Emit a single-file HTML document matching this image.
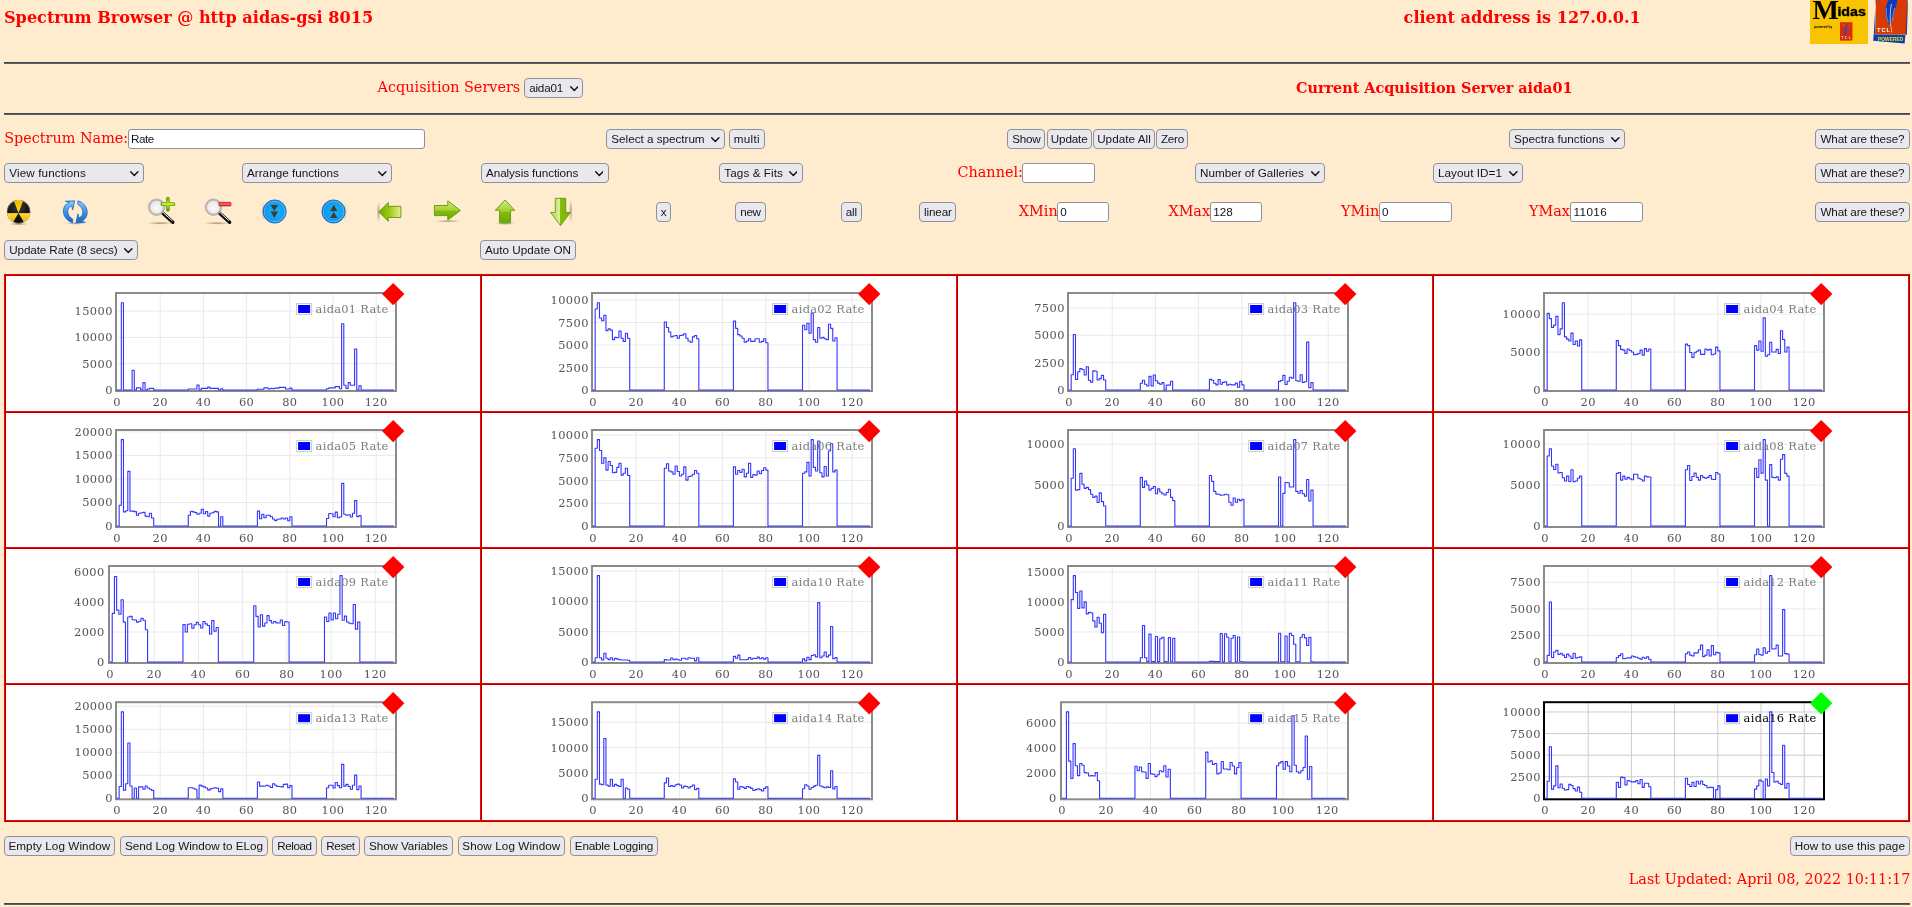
<!DOCTYPE html>
<html lang="en"><head><meta charset="utf-8"><title>Spectrum Browser @ http aidas-gsi 8015</title>
<style>
*{box-sizing:border-box}
html,body{margin:0;padding:0}
body{width:1912px;height:907px;overflow:hidden;background:#ffebcd;position:relative;font-family:"DejaVu Serif","Liberation Serif",serif;color:#f00}
.a{position:absolute;white-space:nowrap}
.t{position:absolute;white-space:nowrap;color:#ff0000;line-height:1;font-family:"DejaVu Serif","Liberation Serif",serif}
.b{font-weight:bold}
.hr{position:absolute;left:4px;width:1906px;height:2px;background:linear-gradient(#45474d 0 1px,#5d5f65 1px 2px)}
.btn,.sel,.inp{position:absolute;font-family:"Liberation Sans","DejaVu Sans",sans-serif;font-size:11.7px;color:#15141a;border:1px solid #8f8f9d;border-radius:4px;background:#e9e9ed;margin:0;padding:0;line-height:18.5px;white-space:nowrap;overflow:hidden}
.btn{text-align:center}
.sel{text-align:left}
.sel select{appearance:none;-webkit-appearance:none;border:0;background:transparent;font:inherit;color:inherit;margin:0;padding:0 0 0 4px;width:100%;height:100%;outline:0;display:block;line-height:18.5px;letter-spacing:inherit}
.sel svg{position:absolute;right:4.2px;top:7px;pointer-events:none}
.inp{background:#fff;border-radius:3px;padding:0 0 2px 2px;text-align:left;outline:0}
.cell{position:absolute;background:#fff;overflow:hidden}
.ln{position:absolute}
svg text{font-family:"DejaVu Serif","Liberation Serif",serif}
</style></head>
<body>
<div id="wrap" style="position:absolute;left:0;top:0;width:1912px;height:907px;will-change:transform">
<div class="t b" style="left:4.0px;top:10.18px;font-size:16.1px">Spectrum Browser @ http aidas-gsi 8015</div>
<div class="t b" style="left:1403.6px;top:10.18px;font-size:16.1px">client address is 127.0.0.1</div>
<svg class="a" style="left:1806px;top:0" width="106" height="48" viewBox="1806 0 106 48">
<rect x="1810" y="0" width="58" height="44" fill="#f8c300"/>
<text x="1812.4" y="18.6" font-size="28" font-weight="bold" fill="#000" style="font-family:'Liberation Serif','DejaVu Serif',serif">M</text>
<text x="1837.4" y="15.6" font-size="12.6" font-weight="bold" fill="#000" stroke="#000" stroke-width=".35" textLength="28.6" lengthAdjust="spacingAndGlyphs" style="font-family:'Liberation Sans','DejaVu Sans',sans-serif">idas</text>
<text x="1814.2" y="28.3" font-size="4" font-weight="bold" fill="#000" textLength="18" lengthAdjust="spacingAndGlyphs" style="font-family:'Liberation Sans','DejaVu Sans',sans-serif">powered by</text>
<rect x="1840" y="22.2" width="12.4" height="18.4" fill="#d92a0a"/>
<path d="M1846.8 24.6c-1.900 2.600-2.900 6.300-2.400 9.400.2 1.200.8 2 1.700 2.400-.4-2.200 0-4.500.8-6.600.5-1.800.7-3.400-.1-5.200z" fill="#1f55c8"/>
<path d="M1843.200 24.200l1.300 1.600M1849.800 25l-1 1.400" stroke="#f0b000" stroke-width=".6" fill="none"/>
<text x="1841.200" y="39.400" font-size="3.200" font-weight="bold" fill="#f6dede" textLength="9.600" style="font-family:'Liberation Sans','DejaVu Sans',sans-serif">TCL</text>
<path d="M1876 0H1907.400L1907 34.600H1875.300Z" fill="#d83a04"/>
<path d="M1873.600 34.400L1905.400 34.800L1904.600 43.600L1873.200 40.800Z" fill="#0b3fb0"/>
<path d="M1875.200 8L1876.200 0H1875.700L1873.800 34.400h1.600Z" fill="#0b3fb0"/>
<path d="M1905.600 34.800L1907.300 0.500L1908 0.500L1906.800 34.800Z" fill="#0b3fb0" opacity=".8"/>
<path d="M1888.600 0c-3 5-3.600 10.600-2.800 16.200.5 3.600 2.200 7.600 4.800 10.400.2-4 1.400-8 3-12 1.600-4.600 3-9.600 3.600-14.600z" fill="#0a3db8"/>
<path d="M1891.400 4c-1.200 6-1.600 13.400-.9 22" stroke="#dfe6fa" stroke-width=".8" fill="none"/>
<path d="M1886.400 8c-.6 4.800-.1 9.600 1.900 14.400M1894.800 8c-1.200 4-2.200 8.400-2.600 13.200" stroke="#7f9be6" stroke-width=".9" fill="none"/>
<text x="1877.000" y="32.200" font-size="5.800" font-weight="bold" fill="#fff" textLength="13" style="font-family:'Liberation Sans','DejaVu Sans',sans-serif">TCL</text>
<path d="M1891 26l.7 6.400" stroke="#fff" stroke-width=".6"/>
<text x="1878.000" y="40.600" font-size="5.200" font-weight="bold" fill="#f2e000" textLength="25.200" lengthAdjust="spacingAndGlyphs" style="font-family:'Liberation Sans','DejaVu Sans',sans-serif">POWERED</text>
</svg>
<div class="hr" style="top:62px"></div>
<div class="t" style="left:377.6px;top:79.82px;font-size:14.4px">Acquisition Servers</div>
<label class="sel" style="left:524.2px;top:78.2px;width:59.3px;height:19.6px;letter-spacing:-0.207px"><select><option>aida01</option><option>aida02</option><option>aida03</option><option>aida04</option></select><svg width="8.6" height="5.6" viewBox="0 0 8.6 5.6"><path d="M0.7 0.8 L4.3 4.5 L7.9 0.8" fill="none" stroke="#15141a" stroke-width="1.5" stroke-linecap="round" stroke-linejoin="round"/></svg></label>
<div class="t b" style="left:1296.0px;top:80.82px;font-size:14.4px">Current Acquisition Server aida01</div>
<div class="hr" style="top:113px"></div>
<div class="t" style="left:4.2px;top:131.32px;font-size:14.4px">Spectrum Name:</div>
<input class="inp" type="text" value="Rate" style="left:128.0px;top:129.2px;width:297.0px;height:19.8px;letter-spacing:-0.450px">
<label class="sel" style="left:606.3px;top:129.2px;width:118.7px;height:19.6px;letter-spacing:-0.015px"><select><option>Select a spectrum</option></select><svg width="8.6" height="5.6" viewBox="0 0 8.6 5.6"><path d="M0.7 0.8 L4.3 4.5 L7.9 0.8" fill="none" stroke="#15141a" stroke-width="1.5" stroke-linecap="round" stroke-linejoin="round"/></svg></label>
<button type="button" class="btn" style="left:729.0px;top:129.2px;width:35.7px;height:19.6px;letter-spacing:0.350px">multi</button>
<button type="button" class="btn" style="left:1007.3px;top:129.2px;width:38.1px;height:19.6px;letter-spacing:-0.232px">Show</button>
<button type="button" class="btn" style="left:1046.7px;top:129.2px;width:44.9px;height:19.6px;letter-spacing:-0.167px">Update</button>
<button type="button" class="btn" style="left:1092.6px;top:129.2px;width:62.8px;height:19.6px;letter-spacing:0.040px">Update All</button>
<button type="button" class="btn" style="left:1156.4px;top:129.2px;width:32.1px;height:19.6px;letter-spacing:-0.252px">Zero</button>
<label class="sel" style="left:1509.1px;top:129.2px;width:115.7px;height:19.6px"><select><option>Spectra functions</option></select><svg width="8.6" height="5.6" viewBox="0 0 8.6 5.6"><path d="M0.7 0.8 L4.3 4.5 L7.9 0.8" fill="none" stroke="#15141a" stroke-width="1.5" stroke-linecap="round" stroke-linejoin="round"/></svg></label>
<button type="button" class="btn" style="left:1815.1px;top:129.2px;width:94.7px;height:19.6px;letter-spacing:-0.110px">What are these?</button>
<label class="sel" style="left:4.3px;top:163.2px;width:139.4px;height:19.6px;letter-spacing:0.105px"><select><option>View functions</option></select><svg width="8.6" height="5.6" viewBox="0 0 8.6 5.6"><path d="M0.7 0.8 L4.3 4.5 L7.9 0.8" fill="none" stroke="#15141a" stroke-width="1.5" stroke-linecap="round" stroke-linejoin="round"/></svg></label>
<label class="sel" style="left:242.0px;top:163.2px;width:149.7px;height:19.6px;letter-spacing:0.012px"><select><option>Arrange functions</option></select><svg width="8.6" height="5.6" viewBox="0 0 8.6 5.6"><path d="M0.7 0.8 L4.3 4.5 L7.9 0.8" fill="none" stroke="#15141a" stroke-width="1.5" stroke-linecap="round" stroke-linejoin="round"/></svg></label>
<label class="sel" style="left:481.0px;top:163.2px;width:127.5px;height:19.6px;letter-spacing:-0.073px"><select><option>Analysis functions</option></select><svg width="8.6" height="5.6" viewBox="0 0 8.6 5.6"><path d="M0.7 0.8 L4.3 4.5 L7.9 0.8" fill="none" stroke="#15141a" stroke-width="1.5" stroke-linecap="round" stroke-linejoin="round"/></svg></label>
<label class="sel" style="left:719.3px;top:163.2px;width:83.3px;height:19.6px;letter-spacing:0.083px"><select><option>Tags &amp; Fits</option></select><svg width="8.6" height="5.6" viewBox="0 0 8.6 5.6"><path d="M0.7 0.8 L4.3 4.5 L7.9 0.8" fill="none" stroke="#15141a" stroke-width="1.5" stroke-linecap="round" stroke-linejoin="round"/></svg></label>
<div class="t" style="left:957.5px;top:165.32px;font-size:14.4px">Channel:</div>
<input class="inp" type="text" value="" style="left:1022.0px;top:163.2px;width:73.0px;height:19.8px">
<label class="sel" style="left:1195.0px;top:163.2px;width:129.8px;height:19.6px;letter-spacing:-0.008px"><select><option>Number of Galleries</option></select><svg width="8.6" height="5.6" viewBox="0 0 8.6 5.6"><path d="M0.7 0.8 L4.3 4.5 L7.9 0.8" fill="none" stroke="#15141a" stroke-width="1.5" stroke-linecap="round" stroke-linejoin="round"/></svg></label>
<label class="sel" style="left:1433.0px;top:163.2px;width:89.9px;height:19.6px;letter-spacing:0.059px"><select><option>Layout ID=1</option></select><svg width="8.6" height="5.6" viewBox="0 0 8.6 5.6"><path d="M0.7 0.8 L4.3 4.5 L7.9 0.8" fill="none" stroke="#15141a" stroke-width="1.5" stroke-linecap="round" stroke-linejoin="round"/></svg></label>
<button type="button" class="btn" style="left:1815.1px;top:163.2px;width:94.7px;height:19.6px;letter-spacing:-0.110px">What are these?</button>
<svg class="a" style="left:0;top:194px" width="600" height="36" viewBox="0 194 600 36">
<defs>
<radialGradient id="gsh"><stop offset="0" stop-color="#5a4a30" stop-opacity=".55"/><stop offset="1" stop-color="#5a4a30" stop-opacity="0"/></radialGradient>
<radialGradient id="gblk" cx=".5" cy=".3" r=".8"><stop offset="0" stop-color="#3a3a3a"/><stop offset=".6" stop-color="#111"/><stop offset="1" stop-color="#000"/></radialGradient>
<linearGradient id="gyel" gradientUnits="userSpaceOnUse" x1="0" y1="200" x2="0" y2="224"><stop offset="0" stop-color="#f2b600"/><stop offset=".45" stop-color="#ffd810"/><stop offset=".5" stop-color="#ffe23a"/><stop offset="1" stop-color="#e9a800"/></linearGradient>
<linearGradient id="gblu" x1="0" y1="0" x2="0" y2="1"><stop offset="0" stop-color="#8fcdf8"/><stop offset=".5" stop-color="#3d97e6"/><stop offset="1" stop-color="#0f66cf"/></linearGradient>
<radialGradient id="gbtn" cx=".55" cy=".5" r=".6"><stop offset="0" stop-color="#16b4f8"/><stop offset=".7" stop-color="#149be9"/><stop offset="1" stop-color="#0a67c8"/></radialGradient>
<radialGradient id="glens" cx=".5" cy=".55" r=".6"><stop offset="0" stop-color="#fbf9f9"/><stop offset="1" stop-color="#e9e2e2"/></radialGradient>
<linearGradient id="ggrnh" x1="0" y1="0" x2="1" y2="0"><stop offset="0" stop-color="#6aa807"/><stop offset=".45" stop-color="#9bc80f"/><stop offset="1" stop-color="#e6ee8c"/></linearGradient>
<linearGradient id="ggrnv" x1="0" y1="0" x2="0" y2="1"><stop offset="0" stop-color="#d2e88e"/><stop offset=".5" stop-color="#a4cf2e"/><stop offset=".52" stop-color="#86bd0b"/><stop offset="1" stop-color="#6aa807"/></linearGradient>
<linearGradient id="ggrnd" x1="0" y1="0" x2="1" y2="0"><stop offset="0" stop-color="#b6d94e"/><stop offset=".45" stop-color="#d9ec9a"/><stop offset=".5" stop-color="#86bd0b"/><stop offset="1" stop-color="#78b207"/></linearGradient>
<linearGradient id="gplus" x1="0" y1="0" x2="0" y2="1"><stop offset="0" stop-color="#7cb60a"/><stop offset=".5" stop-color="#c9e23a"/><stop offset="1" stop-color="#6aa807"/></linearGradient>
<linearGradient id="gminus" x1="0" y1="0" x2="0" y2="1"><stop offset="0" stop-color="#d81e1e"/><stop offset=".5" stop-color="#f07a7a"/><stop offset="1" stop-color="#c41010"/></linearGradient>
</defs>
<!-- radiation -->
<ellipse cx="18.6" cy="224" rx="9.5" ry="1.6" fill="url(#gsh)"/>
<circle cx="18.6" cy="211.8" r="11.7" fill="url(#gblk)"/>
<clipPath id="crad"><circle cx="18.6" cy="211.8" r="11.7"/></clipPath><g fill="url(#gyel)" clip-path="url(#crad)"><path d="M18.5 212.9L29.25 184.89L7.75 184.89Z"/><path d="M18.5 212.9L-11.50 212.90L3.50 238.88Z"/><path d="M18.5 212.9L33.50 238.88L48.50 212.90Z"/></g>
<circle cx="18.6" cy="211.8" r="11.3" fill="none" stroke="#fff" stroke-opacity=".35" stroke-width=".8"/>
<path d="M7 212.9H30.2" stroke="#1a1a3a" stroke-opacity=".45" stroke-width=".7"/>
<!-- refresh -->
<ellipse cx="75.5" cy="223.4" rx="9.5" ry="1.4" fill="url(#gsh)"/>
<g fill="url(#gblu)" stroke="#1565c8" stroke-width=".8" stroke-linejoin="round">
<path d="M72.6 222.800C66.800 221 63.200 216 63.400 210.800 63.700 205.800 67 202.800 69.800 202.200L65.300 201.300 74.600 200.800 72.700 209.800 71.700 205.600C69.400 206.600 67.600 208.600 67.700 211.800 67.900 215 70 217.600 72.800 219.200Z"/>
<path d="M78 200.800C83.800 202.600 87.400 207.600 87.200 212.800 86.900 217.800 83.600 220.800 80.800 221.400L85.300 222.300 76 222.800 77.900 213.800 78.900 218C81.200 217 83 215 82.900 211.800 82.700 208.600 80.600 206 77.800 204.400Z"/>
</g>
<!-- zoom in -->
<ellipse cx="160" cy="223.200" rx="13" ry="1.500" fill="url(#gsh)"/>
<path d="M162.300 212.800L172.800 222.300" stroke="#0a0a0a" stroke-width="3.400" stroke-linecap="round"/>
<path d="M162.800 212.200L172 220.600" stroke="#f4f4f4" stroke-width="1" stroke-linecap="round"/>
<circle cx="156.600" cy="207.200" r="7.300" fill="url(#glens)" stroke="#b9b9b9" stroke-width="1.900"/>
<circle cx="156.600" cy="207.200" r="8.300" fill="none" stroke="#9c9c9c" stroke-width=".5"/>
<path d="M167.900 198.600V209.800M162.300 204.200H173.500" stroke="#64a005" stroke-width="3.700" stroke-linecap="round"/>
<path d="M167.900 198.900V209.500M162.600 204.200H173.200" stroke="url(#gplus)" stroke-width="2.300" stroke-linecap="round"/>
<path d="M163 204.200H172.800" stroke="#d6ea50" stroke-width="1.100" stroke-linecap="round"/>
<!-- zoom out -->
<ellipse cx="217" cy="223.200" rx="13" ry="1.500" fill="url(#gsh)"/>
<path d="M219.100 212.800L229.600 222.300" stroke="#0a0a0a" stroke-width="3.400" stroke-linecap="round"/>
<path d="M219.600 212.200L228.800 220.600" stroke="#f4f4f4" stroke-width="1" stroke-linecap="round"/>
<circle cx="213.400" cy="207.200" r="7.300" fill="url(#glens)" stroke="#b9b9b9" stroke-width="1.900"/>
<circle cx="213.400" cy="207.200" r="8.300" fill="none" stroke="#9c9c9c" stroke-width=".5"/>
<rect x="218.800" y="202.300" width="12.300" height="3.700" rx="1" fill="url(#gminus)" stroke="#c01515" stroke-width=".6"/>
<!-- down / up round buttons -->
<ellipse cx="263" cy="211.500" rx="1.800" ry="10" fill="url(#gsh)" opacity=".5"/>
<circle cx="274.600" cy="211.500" r="11.600" fill="url(#gbtn)" stroke="#0a62c6" stroke-width=".8"/>
<circle cx="274.600" cy="211.500" r="10.300" fill="none" stroke="#9fdcff" stroke-opacity=".7" stroke-width=".7"/>
<path d="M270.600 205H278.100L274.350 211.200ZM270.600 211.600H278.100L274.350 218.100Z" fill="#3b3b3b"/>
<ellipse cx="345.200" cy="211.500" rx="1.800" ry="10" fill="url(#gsh)" opacity=".5"/>
<circle cx="333.500" cy="211.500" r="11.600" fill="url(#gbtn)" stroke="#0a62c6" stroke-width=".8"/>
<circle cx="333.500" cy="211.500" r="10.300" fill="none" stroke="#9fdcff" stroke-opacity=".7" stroke-width=".7"/>
<path d="M330.200 211.200H337.400L333.800 204.800ZM330.200 217.900H337.400L333.800 211.700Z" fill="#3b3b3b"/>
<!-- left arrow -->
<ellipse cx="378.600" cy="212" rx="2" ry="11" fill="url(#gsh)" opacity=".8"/>
<path d="M378.900 211.800L388.300 202.400V206.300H400.900V217.500H388.300V221.300Z" fill="url(#ggrnh)" stroke="#5d9a08" stroke-width=".9" stroke-linejoin="round"/>
<!-- right arrow -->
<ellipse cx="448" cy="221.200" rx="13" ry="1.300" fill="url(#gsh)"/>
<path d="M460.400 210.500L447.800 200.800V205.500H434.400V215.600H447.800V220Z" fill="url(#ggrnv)" stroke="#5d9a08" stroke-width=".9" stroke-linejoin="round"/>
<!-- up arrow -->
<ellipse cx="505" cy="223.600" rx="10" ry="1.300" fill="url(#gsh)"/>
<path d="M505 200L514.700 210.300H510.600V222.800H499.500V210.300H495.300Z" fill="url(#ggrnv)" stroke="#5d9a08" stroke-width=".9" stroke-linejoin="round"/>
<!-- down arrow -->
<ellipse cx="570.800" cy="211" rx="2" ry="12" fill="url(#gsh)" opacity=".8"/>
<path d="M560.500 225.600L550.600 212.400H555.300V198.300H565.700V212.400H570.400Z" fill="url(#ggrnd)" stroke="#5d9a08" stroke-width=".9" stroke-linejoin="round"/>
</svg>
<button type="button" class="btn" style="left:656.3px;top:202.2px;width:14.5px;height:19.6px">x</button>
<button type="button" class="btn" style="left:735.3px;top:202.2px;width:30.4px;height:19.6px;letter-spacing:-0.346px">new</button>
<button type="button" class="btn" style="left:841.0px;top:202.2px;width:20.6px;height:19.6px;letter-spacing:-0.206px">all</button>
<button type="button" class="btn" style="left:919.4px;top:202.2px;width:37.1px;height:19.6px;letter-spacing:-0.144px">linear</button>
<div class="t" style="left:1018.8px;top:204.32px;font-size:14.4px">XMin</div>
<input class="inp" type="text" value="0" style="left:1057.2px;top:202.2px;width:51.5px;height:19.8px">
<div class="t" style="left:1168.4px;top:204.32px;font-size:14.4px">XMax</div>
<input class="inp" type="text" value="128" style="left:1210.2px;top:202.2px;width:51.8px;height:19.8px;letter-spacing:0.042px">
<div class="t" style="left:1341.1px;top:204.32px;font-size:14.4px">YMin</div>
<input class="inp" type="text" value="0" style="left:1379.0px;top:202.2px;width:73.1px;height:19.8px">
<div class="t" style="left:1528.9px;top:204.32px;font-size:14.4px">YMax</div>
<input class="inp" type="text" value="11016" style="left:1570.4px;top:202.2px;width:72.8px;height:19.8px;letter-spacing:0.432px">
<button type="button" class="btn" style="left:1815.1px;top:202.2px;width:94.7px;height:19.6px;letter-spacing:-0.110px">What are these?</button>
<label class="sel" style="left:4.2px;top:240.2px;width:133.8px;height:19.6px;letter-spacing:-0.108px"><select><option>Update Rate (8 secs)</option></select><svg width="8.6" height="5.6" viewBox="0 0 8.6 5.6"><path d="M0.7 0.8 L4.3 4.5 L7.9 0.8" fill="none" stroke="#15141a" stroke-width="1.5" stroke-linecap="round" stroke-linejoin="round"/></svg></label>
<button type="button" class="btn" style="left:480.3px;top:240.2px;width:95.4px;height:19.6px;letter-spacing:0.020px">Auto Update ON</button>
<div class="a" style="left:4px;top:274px;width:1906px;height:548px;background:#ff0000"></div>
<div class="ln" style="left:5px;top:274px;width:1px;height:548px;background:#aa0000"></div>
<div class="ln" style="left:481px;top:274px;width:1px;height:548px;background:#aa0000"></div>
<div class="ln" style="left:957px;top:274px;width:1px;height:548px;background:#aa0000"></div>
<div class="ln" style="left:1433px;top:274px;width:1px;height:548px;background:#aa0000"></div>
<div class="ln" style="left:1909px;top:274px;width:1px;height:548px;background:#aa0000"></div>
<div class="ln" style="left:4px;top:275px;width:1906px;height:1px;background:#aa0000"></div>
<div class="ln" style="left:4px;top:412px;width:1906px;height:1px;background:#aa0000"></div>
<div class="ln" style="left:4px;top:548px;width:1906px;height:1px;background:#aa0000"></div>
<div class="ln" style="left:4px;top:684px;width:1906px;height:1px;background:#aa0000"></div>
<div class="ln" style="left:4px;top:821px;width:1906px;height:1px;background:#aa0000"></div>
<div class="cell" style="left:6px;top:276px;width:474px;height:135px"><svg width="474" height="135" viewBox="0 0 474 135" style="display:block"><path d="M154.20 18.00V114.00M197.40 18.00V114.00M240.60 18.00V114.00M283.80 18.00V114.00M327.00 18.00V114.00M370.20 18.00V114.00M111.00 87.71H389.00M111.00 61.43H389.00M111.00 35.14H389.00" stroke="#eaeaea" stroke-width="1" fill="none"/><rect x="110.00" y="17.00" width="280.00" height="98.00" fill="none" stroke="#8b8b8b" stroke-width="2"/><path d="M111.00 114.00H113.16V114.00H115.32V26.73H117.48V114.00H119.64V114.00H121.80V114.00H123.96V114.00H126.12V94.28H128.28V114.00H130.44V111.90H132.60V111.90H134.76V114.00H136.92V106.64H139.08V114.00H141.24V112.95H143.40V112.42H145.56V112.42H147.72V114.00H149.88V114.00H152.04V114.00H154.20V114.00H156.36V114.00H158.52V114.00H160.68V114.00H162.84V114.00H165.00V114.00H167.16V114.00H169.32V114.00H171.48V114.00H173.64V114.00H175.80V114.00H177.96V114.00H180.12V114.00H182.28V112.95H184.44V112.95H186.60V112.95H188.76V112.95H190.92V109.06H193.08V114.00H195.24V112.42H197.40V112.42H199.56V112.42H201.72V111.11H203.88V112.42H206.04V112.42H208.20V112.42H210.36V112.42H212.52V114.00H214.68V112.69H216.84V114.00H219.00V114.00H221.16V114.00H223.32V114.00H225.48V114.00H227.64V114.00H229.80V114.00H231.96V114.00H234.12V114.00H236.28V114.00H238.44V114.00H240.60V114.00H242.76V114.00H244.92V114.00H247.08V114.00H249.24V114.00H251.40V113.21H253.56V113.21H255.72V113.21H257.88V111.90H260.04V111.90H262.20V112.95H264.36V112.42H266.52V112.69H268.68V112.16H270.84V112.16H273.00V111.37H275.16V111.37H277.32V111.37H279.48V112.95H281.64V112.95H283.80V112.16H285.96V114.00H288.12V114.00H290.28V114.00H292.44V114.00H294.60V114.00H296.76V114.00H298.92V114.00H301.08V114.00H303.24V114.00H305.40V114.00H307.56V114.00H309.72V114.00H311.88V114.00H314.04V114.00H316.20V114.00H318.36V114.00H320.52V112.69H322.68V111.90H324.84V111.90H327.00V111.90H329.16V110.58H331.32V110.58H333.48V112.69H335.64V47.76H337.80V109.27H339.96V112.42H342.12V106.64H344.28V109.27H346.44V109.27H348.60V72.99H350.76V114.00H352.92V109.79H355.08V114.00H357.24V114.00H359.40V114.00H361.56V114.00H363.72V114.00H365.88V114.00H368.04V114.00H370.20V114.00H372.36V114.00H374.52V114.00H376.68V114.00H378.84V114.00H381.00V114.00H383.16V114.00H385.32V114.00H387.48" stroke="#3434ff" stroke-width="1.1" fill="none" stroke-linejoin="round" stroke-linecap="round"/><g font-size="11.4" letter-spacing="0.4" fill="#545454"><text x="111.00" y="129.80" text-anchor="middle">0</text><text x="154.20" y="129.80" text-anchor="middle">20</text><text x="197.40" y="129.80" text-anchor="middle">40</text><text x="240.60" y="129.80" text-anchor="middle">60</text><text x="283.80" y="129.80" text-anchor="middle">80</text><text x="327.00" y="129.80" text-anchor="middle">100</text><text x="370.20" y="129.80" text-anchor="middle">120</text><text x="106.80" y="118.00" text-anchor="end">0</text><text x="106.80" y="91.71" text-anchor="end">5000</text><text x="106.80" y="65.43" text-anchor="end">10000</text><text x="106.80" y="39.14" text-anchor="end">15000</text></g><rect x="290.60" y="27.50" width="15" height="11" fill="#fff" stroke="#ccc" stroke-width="1"/><rect x="292.10" y="29.00" width="12" height="8" fill="#0000ff"/><text x="309.60" y="36.80" font-size="11.4" letter-spacing="0.3" fill="#7d7d7d">aida01 Rate</text><path d="M387.20 6.90L398.40 18.10L387.20 29.30L376.00 18.10Z" fill="#ff0000"/></svg></div>
<div class="cell" style="left:482px;top:276px;width:474px;height:135px"><svg width="474" height="135" viewBox="0 0 474 135" style="display:block"><path d="M154.20 18.00V114.00M197.40 18.00V114.00M240.60 18.00V114.00M283.80 18.00V114.00M327.00 18.00V114.00M370.20 18.00V114.00M111.00 91.51H389.00M111.00 69.01H389.00M111.00 46.52H389.00M111.00 24.03H389.00" stroke="#eaeaea" stroke-width="1" fill="none"/><rect x="110.00" y="17.00" width="280.00" height="98.00" fill="none" stroke="#8b8b8b" stroke-width="2"/><path d="M111.00 114.00H113.16V33.03H115.32V26.73H117.48V42.02H119.64V44.72H121.80V39.32H123.96V54.62H126.12V52.82H128.28V54.17H130.44V63.62H132.60V61.37H134.76V61.82H136.92V55.07H139.08V62.27H141.24V65.42H143.40V57.32H145.56V62.27H147.72V114.00H149.88V114.00H152.04V114.00H154.20V114.00H156.36V114.00H158.52V114.00H160.68V114.00H162.84V114.00H165.00V114.00H167.16V114.00H169.32V114.00H171.48V114.00H173.64V114.00H175.80V114.00H177.96V114.00H180.12V114.00H182.28V46.07H184.44V51.47H186.60V55.97H188.76V60.92H190.92V60.02H193.08V59.57H195.24V62.27H197.40V59.57H199.56V59.12H201.72V57.77H203.88V62.27H206.04V64.97H208.20V66.31H210.36V60.92H212.52V59.57H214.68V62.72H216.84V114.00H219.00V114.00H221.16V114.00H223.32V114.00H225.48V114.00H227.64V114.00H229.80V114.00H231.96V114.00H234.12V114.00H236.28V114.00H238.44V114.00H240.60V114.00H242.76V114.00H244.92V114.00H247.08V114.00H249.24V114.00H251.40V45.17H253.56V52.37H255.72V58.67H257.88V60.02H260.04V62.27H262.20V66.31H264.36V64.97H266.52V62.72H268.68V65.42H270.84V65.42H273.00V62.72H275.16V62.72H277.32V66.31H279.48V65.42H281.64V62.72H283.80V66.76H285.96V114.00H288.12V114.00H290.28V114.00H292.44V114.00H294.60V114.00H296.76V114.00H298.92V114.00H301.08V114.00H303.24V114.00H305.40V114.00H307.56V114.00H309.72V114.00H311.88V114.00H314.04V114.00H316.20V114.00H318.36V114.00H320.52V49.22H322.68V53.72H324.84V47.42H327.00V57.32H329.16V37.07H331.32V63.62H333.48V66.31H335.64V51.47H337.80V62.27H339.96V61.37H342.12V62.72H344.28V63.62H346.44V48.32H348.60V52.37H350.76V64.97H352.92V61.82H355.08V114.00H357.24V114.00H359.40V114.00H361.56V114.00H363.72V114.00H365.88V114.00H368.04V114.00H370.20V114.00H372.36V114.00H374.52V114.00H376.68V114.00H378.84V114.00H381.00V114.00H383.16V114.00H385.32V114.00H387.48" stroke="#3434ff" stroke-width="1.1" fill="none" stroke-linejoin="round" stroke-linecap="round"/><g font-size="11.4" letter-spacing="0.4" fill="#545454"><text x="111.00" y="129.80" text-anchor="middle">0</text><text x="154.20" y="129.80" text-anchor="middle">20</text><text x="197.40" y="129.80" text-anchor="middle">40</text><text x="240.60" y="129.80" text-anchor="middle">60</text><text x="283.80" y="129.80" text-anchor="middle">80</text><text x="327.00" y="129.80" text-anchor="middle">100</text><text x="370.20" y="129.80" text-anchor="middle">120</text><text x="106.80" y="118.00" text-anchor="end">0</text><text x="106.80" y="95.51" text-anchor="end">2500</text><text x="106.80" y="73.01" text-anchor="end">5000</text><text x="106.80" y="50.52" text-anchor="end">7500</text><text x="106.80" y="28.03" text-anchor="end">10000</text></g><rect x="290.60" y="27.50" width="15" height="11" fill="#fff" stroke="#ccc" stroke-width="1"/><rect x="292.10" y="29.00" width="12" height="8" fill="#0000ff"/><text x="309.60" y="36.80" font-size="11.4" letter-spacing="0.3" fill="#7d7d7d">aida02 Rate</text><path d="M387.20 6.90L398.40 18.10L387.20 29.30L376.00 18.10Z" fill="#ff0000"/></svg></div>
<div class="cell" style="left:958px;top:276px;width:474px;height:135px"><svg width="474" height="135" viewBox="0 0 474 135" style="display:block"><path d="M154.20 18.00V114.00M197.40 18.00V114.00M240.60 18.00V114.00M283.80 18.00V114.00M327.00 18.00V114.00M370.20 18.00V114.00M111.00 86.66H389.00M111.00 59.32H389.00M111.00 31.98H389.00" stroke="#eaeaea" stroke-width="1" fill="none"/><rect x="110.00" y="17.00" width="280.00" height="98.00" fill="none" stroke="#8b8b8b" stroke-width="2"/><path d="M111.00 114.00H113.16V98.69H115.32V58.55H117.48V103.39H119.64V95.74H121.80V92.67H123.96V93.55H126.12V99.02H128.28V90.81H130.44V104.27H132.60V106.13H134.76V94.86H136.92V95.19H139.08V103.94H141.24V102.63H143.40V99.35H145.56V103.94H147.72V114.00H149.88V114.00H152.04V114.00H154.20V114.00H156.36V114.00H158.52V114.00H160.68V114.00H162.84V114.00H165.00V114.00H167.16V114.00H169.32V114.00H171.48V114.00H173.64V114.00H175.80V114.00H177.96V114.00H180.12V114.00H182.28V107.22H184.44V104.27H186.60V108.20H188.76V109.95H190.92V100.33H193.08V109.84H195.24V99.02H197.40V104.81H199.56V107.11H201.72V108.20H203.88V106.67H206.04V114.00H208.20V109.08H210.36V109.08H212.52V105.25H214.68V114.00H216.84V114.00H219.00V114.00H221.16V114.00H223.32V114.00H225.48V114.00H227.64V114.00H229.80V114.00H231.96V114.00H234.12V114.00H236.28V114.00H238.44V114.00H240.60V114.00H242.76V114.00H244.92V114.00H247.08V114.00H249.24V114.00H251.40V103.39H253.56V104.27H255.72V107.22H257.88V108.86H260.04V103.61H262.20V108.20H264.36V106.34H266.52V105.80H268.68V109.08H270.84V108.20H273.00V108.86H275.16V108.86H277.32V107.11H279.48V111.27H281.64V105.36H283.80V108.86H285.96V114.00H288.12V114.00H290.28V114.00H292.44V114.00H294.60V114.00H296.76V114.00H298.92V114.00H301.08V114.00H303.24V114.00H305.40V114.00H307.56V114.00H309.72V114.00H311.88V114.00H314.04V114.00H316.20V114.00H318.36V114.00H320.52V105.36H322.68V104.49H324.84V99.35H327.00V108.53H329.16V105.25H331.32V101.20H333.48V102.08H335.64V26.73H337.80V104.81H339.96V105.25H342.12V98.80H344.28V106.34H346.44V105.80H348.60V66.10H350.76V111.59H352.92V106.67H355.08V114.00H357.24V114.00H359.40V114.00H361.56V114.00H363.72V114.00H365.88V114.00H368.04V114.00H370.20V114.00H372.36V114.00H374.52V114.00H376.68V114.00H378.84V114.00H381.00V114.00H383.16V114.00H385.32V114.00H387.48" stroke="#3434ff" stroke-width="1.1" fill="none" stroke-linejoin="round" stroke-linecap="round"/><g font-size="11.4" letter-spacing="0.4" fill="#545454"><text x="111.00" y="129.80" text-anchor="middle">0</text><text x="154.20" y="129.80" text-anchor="middle">20</text><text x="197.40" y="129.80" text-anchor="middle">40</text><text x="240.60" y="129.80" text-anchor="middle">60</text><text x="283.80" y="129.80" text-anchor="middle">80</text><text x="327.00" y="129.80" text-anchor="middle">100</text><text x="370.20" y="129.80" text-anchor="middle">120</text><text x="106.80" y="118.00" text-anchor="end">0</text><text x="106.80" y="90.66" text-anchor="end">2500</text><text x="106.80" y="63.32" text-anchor="end">5000</text><text x="106.80" y="35.98" text-anchor="end">7500</text></g><rect x="290.60" y="27.50" width="15" height="11" fill="#fff" stroke="#ccc" stroke-width="1"/><rect x="292.10" y="29.00" width="12" height="8" fill="#0000ff"/><text x="309.60" y="36.80" font-size="11.4" letter-spacing="0.3" fill="#7d7d7d">aida03 Rate</text><path d="M387.20 6.90L398.40 18.10L387.20 29.30L376.00 18.10Z" fill="#ff0000"/></svg></div>
<div class="cell" style="left:1434px;top:276px;width:474px;height:135px"><svg width="474" height="135" viewBox="0 0 474 135" style="display:block"><path d="M154.20 18.00V114.00M197.40 18.00V114.00M240.60 18.00V114.00M283.80 18.00V114.00M327.00 18.00V114.00M370.20 18.00V114.00M111.00 76.06H389.00M111.00 38.11H389.00" stroke="#eaeaea" stroke-width="1" fill="none"/><rect x="110.00" y="17.00" width="280.00" height="98.00" fill="none" stroke="#8b8b8b" stroke-width="2"/><path d="M111.00 114.00H113.16V37.35H115.32V42.66H117.48V51.39H119.64V49.11H121.80V40.39H123.96V58.60H126.12V52.91H128.28V26.73H130.44V60.88H132.60V63.15H134.76V65.05H136.92V57.08H139.08V68.47H141.24V65.05H143.40V69.98H145.56V63.91H147.72V114.00H149.88V114.00H152.04V114.00H154.20V114.00H156.36V114.00H158.52V114.00H160.68V114.00H162.84V114.00H165.00V114.00H167.16V114.00H169.32V114.00H171.48V114.00H173.64V114.00H175.80V114.00H177.96V114.00H180.12V114.00H182.28V64.67H184.44V69.60H186.60V73.40H188.76V74.16H190.92V77.57H193.08V73.02H195.24V74.54H197.40V76.06H199.56V78.71H201.72V78.33H203.88V77.57H206.04V74.16H208.20V79.09H210.36V72.64H212.52V75.30H214.68V73.02H216.84V114.00H219.00V114.00H221.16V114.00H223.32V114.00H225.48V114.00H227.64V114.00H229.80V114.00H231.96V114.00H234.12V114.00H236.28V114.00H238.44V114.00H240.60V114.00H242.76V114.00H244.92V114.00H247.08V114.00H249.24V114.00H251.40V68.09H253.56V69.60H255.72V76.43H257.88V81.37H260.04V76.81H262.20V75.30H264.36V74.16H266.52V78.33H268.68V78.33H270.84V73.02H273.00V74.16H275.16V73.40H277.32V78.71H279.48V77.95H281.64V71.12H283.80V74.92H285.96V114.00H288.12V114.00H290.28V114.00H292.44V114.00H294.60V114.00H296.76V114.00H298.92V114.00H301.08V114.00H303.24V114.00H305.40V114.00H307.56V114.00H309.72V114.00H311.88V114.00H314.04V114.00H316.20V114.00H318.36V114.00H320.52V69.60H322.68V74.16H324.84V65.05H327.00V75.30H329.16V41.91H331.32V80.23H333.48V78.71H335.64V66.19H337.80V76.06H339.96V76.06H342.12V73.40H344.28V77.57H346.44V54.81H348.60V63.53H350.76V76.06H352.92V71.12H355.08V114.00H357.24V114.00H359.40V114.00H361.56V114.00H363.72V114.00H365.88V114.00H368.04V114.00H370.20V114.00H372.36V114.00H374.52V114.00H376.68V114.00H378.84V114.00H381.00V114.00H383.16V114.00H385.32V114.00H387.48" stroke="#3434ff" stroke-width="1.1" fill="none" stroke-linejoin="round" stroke-linecap="round"/><g font-size="11.4" letter-spacing="0.4" fill="#545454"><text x="111.00" y="129.80" text-anchor="middle">0</text><text x="154.20" y="129.80" text-anchor="middle">20</text><text x="197.40" y="129.80" text-anchor="middle">40</text><text x="240.60" y="129.80" text-anchor="middle">60</text><text x="283.80" y="129.80" text-anchor="middle">80</text><text x="327.00" y="129.80" text-anchor="middle">100</text><text x="370.20" y="129.80" text-anchor="middle">120</text><text x="106.80" y="118.00" text-anchor="end">0</text><text x="106.80" y="80.06" text-anchor="end">5000</text><text x="106.80" y="42.11" text-anchor="end">10000</text></g><rect x="290.60" y="27.50" width="15" height="11" fill="#fff" stroke="#ccc" stroke-width="1"/><rect x="292.10" y="29.00" width="12" height="8" fill="#0000ff"/><text x="309.60" y="36.80" font-size="11.4" letter-spacing="0.3" fill="#7d7d7d">aida04 Rate</text><path d="M387.20 6.90L398.40 18.10L387.20 29.30L376.00 18.10Z" fill="#ff0000"/></svg></div>
<div class="cell" style="left:6px;top:413px;width:474px;height:134px"><svg width="474" height="134" viewBox="0 0 474 134" style="display:block"><path d="M154.20 18.00V113.00M197.40 18.00V113.00M240.60 18.00V113.00M283.80 18.00V113.00M327.00 18.00V113.00M370.20 18.00V113.00M111.00 89.47H389.00M111.00 65.94H389.00M111.00 42.40H389.00M111.00 18.87H389.00" stroke="#eaeaea" stroke-width="1" fill="none"/><rect x="110.00" y="17.00" width="280.00" height="97.00" fill="none" stroke="#8b8b8b" stroke-width="2"/><path d="M111.00 113.00H113.16V92.29H115.32V26.64H117.48V98.88H119.64V97.70H121.80V58.41H123.96V98.08H126.12V98.08H128.28V98.65H130.44V102.18H132.60V100.29H134.76V99.82H136.92V99.35H139.08V103.12H141.24V103.82H143.40V100.29H145.56V105.00H147.72V113.00H149.88V113.00H152.04V113.00H154.20V113.00H156.36V113.00H158.52V113.00H160.68V113.00H162.84V113.00H165.00V113.00H167.16V113.00H169.32V113.00H171.48V113.00H173.64V113.00H175.80V113.00H177.96V113.00H180.12V113.00H182.28V102.18H184.44V98.27H186.60V98.88H188.76V99.59H190.92V101.23H193.08V100.29H195.24V96.29H197.40V100.76H199.56V98.65H201.72V103.12H203.88V100.29H206.04V99.82H208.20V98.41H210.36V98.88H212.52V113.00H214.68V103.82H216.84V113.00H219.00V113.00H221.16V113.00H223.32V113.00H225.48V113.00H227.64V113.00H229.80V113.00H231.96V113.00H234.12V113.00H236.28V113.00H238.44V113.00H240.60V113.00H242.76V113.00H244.92V113.00H247.08V113.00H249.24V113.00H251.40V98.08H253.56V105.70H255.72V101.23H257.88V104.76H260.04V102.18H262.20V102.18H264.36V103.82H266.52V105.94H268.68V107.59H270.84V106.27H273.00V105.94H275.16V105.00H277.32V105.94H279.48V105.00H281.64V107.82H283.80V103.82H285.96V113.00H288.12V113.00H290.28V113.00H292.44V113.00H294.60V113.00H296.76V113.00H298.92V113.00H301.08V113.00H303.24V113.00H305.40V113.00H307.56V113.00H309.72V113.00H311.88V113.00H314.04V113.00H316.20V113.00H318.36V113.00H320.52V105.47H322.68V100.53H324.84V100.76H327.00V103.82H329.16V99.12H331.32V104.76H333.48V104.06H335.64V70.41H337.80V101.23H339.96V102.18H342.12V101.70H344.28V104.06H346.44V100.29H348.60V87.59H350.76V103.59H352.92V102.65H355.08V113.00H357.24V113.00H359.40V113.00H361.56V113.00H363.72V113.00H365.88V113.00H368.04V113.00H370.20V113.00H372.36V113.00H374.52V113.00H376.68V113.00H378.84V113.00H381.00V113.00H383.16V113.00H385.32V113.00H387.48" stroke="#3434ff" stroke-width="1.1" fill="none" stroke-linejoin="round" stroke-linecap="round"/><g font-size="11.4" letter-spacing="0.4" fill="#545454"><text x="111.00" y="128.80" text-anchor="middle">0</text><text x="154.20" y="128.80" text-anchor="middle">20</text><text x="197.40" y="128.80" text-anchor="middle">40</text><text x="240.60" y="128.80" text-anchor="middle">60</text><text x="283.80" y="128.80" text-anchor="middle">80</text><text x="327.00" y="128.80" text-anchor="middle">100</text><text x="370.20" y="128.80" text-anchor="middle">120</text><text x="106.80" y="117.00" text-anchor="end">0</text><text x="106.80" y="93.47" text-anchor="end">5000</text><text x="106.80" y="69.94" text-anchor="end">10000</text><text x="106.80" y="46.40" text-anchor="end">15000</text><text x="106.80" y="22.87" text-anchor="end">20000</text></g><rect x="290.60" y="27.50" width="15" height="11" fill="#fff" stroke="#ccc" stroke-width="1"/><rect x="292.10" y="29.00" width="12" height="8" fill="#0000ff"/><text x="309.60" y="36.80" font-size="11.4" letter-spacing="0.3" fill="#7d7d7d">aida05 Rate</text><path d="M387.20 6.90L398.40 18.10L387.20 29.30L376.00 18.10Z" fill="#ff0000"/></svg></div>
<div class="cell" style="left:482px;top:413px;width:474px;height:134px"><svg width="474" height="134" viewBox="0 0 474 134" style="display:block"><path d="M154.20 18.00V113.00M197.40 18.00V113.00M240.60 18.00V113.00M283.80 18.00V113.00M327.00 18.00V113.00M370.20 18.00V113.00M111.00 90.27H389.00M111.00 67.55H389.00M111.00 44.82H389.00M111.00 22.09H389.00" stroke="#eaeaea" stroke-width="1" fill="none"/><rect x="110.00" y="17.00" width="280.00" height="97.00" fill="none" stroke="#8b8b8b" stroke-width="2"/><path d="M111.00 113.00H113.16V35.18H115.32V26.64H117.48V37.55H119.64V50.27H121.80V44.82H123.96V57.09H126.12V48.45H128.28V52.55H130.44V59.82H132.60V59.36H134.76V54.36H136.92V50.27H139.08V62.09H141.24V60.27H143.40V55.27H145.56V62.55H147.72V113.00H149.88V113.00H152.04V113.00H154.20V113.00H156.36V113.00H158.52V113.00H160.68V113.00H162.84V113.00H165.00V113.00H167.16V113.00H169.32V113.00H171.48V113.00H173.64V113.00H175.80V113.00H177.96V113.00H180.12V113.00H182.28V55.27H184.44V50.73H186.60V58.00H188.76V58.91H190.92V61.18H193.08V53.00H195.24V58.45H197.40V63.00H199.56V61.18H201.72V53.91H203.88V67.09H206.04V63.45H208.20V63.00H210.36V61.18H212.52V57.55H214.68V60.27H216.84V113.00H219.00V113.00H221.16V113.00H223.32V113.00H225.48V113.00H227.64V113.00H229.80V113.00H231.96V113.00H234.12V113.00H236.28V113.00H238.44V113.00H240.60V113.00H242.76V113.00H244.92V113.00H247.08V113.00H249.24V113.00H251.40V53.91H253.56V61.18H255.72V57.55H257.88V59.36H260.04V56.18H262.20V63.91H264.36V60.27H266.52V50.27H268.68V64.36H270.84V61.64H273.00V62.09H275.16V58.00H277.32V60.73H279.48V57.55H281.64V54.82H283.80V57.09H285.96V113.00H288.12V113.00H290.28V113.00H292.44V113.00H294.60V113.00H296.76V113.00H298.92V113.00H301.08V113.00H303.24V113.00H305.40V113.00H307.56V113.00H309.72V113.00H311.88V113.00H314.04V113.00H316.20V113.00H318.36V113.00H320.52V60.27H322.68V58.91H324.84V49.36H327.00V63.00H329.16V26.64H331.32V54.36H333.48V58.00H335.64V28.00H337.80V59.82H339.96V63.91H342.12V53.45H344.28V63.00H346.44V38.00H348.60V30.73H350.76V58.91H352.92V57.09H355.08V113.00H357.24V113.00H359.40V113.00H361.56V113.00H363.72V113.00H365.88V113.00H368.04V113.00H370.20V113.00H372.36V113.00H374.52V113.00H376.68V113.00H378.84V113.00H381.00V113.00H383.16V113.00H385.32V113.00H387.48" stroke="#3434ff" stroke-width="1.1" fill="none" stroke-linejoin="round" stroke-linecap="round"/><g font-size="11.4" letter-spacing="0.4" fill="#545454"><text x="111.00" y="128.80" text-anchor="middle">0</text><text x="154.20" y="128.80" text-anchor="middle">20</text><text x="197.40" y="128.80" text-anchor="middle">40</text><text x="240.60" y="128.80" text-anchor="middle">60</text><text x="283.80" y="128.80" text-anchor="middle">80</text><text x="327.00" y="128.80" text-anchor="middle">100</text><text x="370.20" y="128.80" text-anchor="middle">120</text><text x="106.80" y="117.00" text-anchor="end">0</text><text x="106.80" y="94.27" text-anchor="end">2500</text><text x="106.80" y="71.55" text-anchor="end">5000</text><text x="106.80" y="48.82" text-anchor="end">7500</text><text x="106.80" y="26.09" text-anchor="end">10000</text></g><rect x="290.60" y="27.50" width="15" height="11" fill="#fff" stroke="#ccc" stroke-width="1"/><rect x="292.10" y="29.00" width="12" height="8" fill="#0000ff"/><text x="309.60" y="36.80" font-size="11.4" letter-spacing="0.3" fill="#7d7d7d">aida06 Rate</text><path d="M387.20 6.90L398.40 18.10L387.20 29.30L376.00 18.10Z" fill="#ff0000"/></svg></div>
<div class="cell" style="left:958px;top:413px;width:474px;height:134px"><svg width="474" height="134" viewBox="0 0 474 134" style="display:block"><path d="M154.20 18.00V113.00M197.40 18.00V113.00M240.60 18.00V113.00M283.80 18.00V113.00M327.00 18.00V113.00M370.20 18.00V113.00M111.00 72.11H389.00M111.00 31.22H389.00" stroke="#eaeaea" stroke-width="1" fill="none"/><rect x="110.00" y="17.00" width="280.00" height="97.00" fill="none" stroke="#8b8b8b" stroke-width="2"/><path d="M111.00 113.00H113.16V65.32H115.32V35.80H117.48V77.10H119.64V76.61H121.80V60.33H123.96V71.29H126.12V75.38H128.28V74.40H130.44V76.61H132.60V81.27H134.76V84.38H136.92V83.15H139.08V89.53H141.24V79.88H143.40V88.63H145.56V92.96H147.72V113.00H149.88V113.00H152.04V113.00H154.20V113.00H156.36V113.00H158.52V113.00H160.68V113.00H162.84V113.00H165.00V113.00H167.16V113.00H169.32V113.00H171.48V113.00H173.64V113.00H175.80V113.00H177.96V113.00H180.12V113.00H182.28V64.34H184.44V74.40H186.60V68.02H188.76V72.11H190.92V77.10H193.08V75.38H195.24V73.50H197.40V80.78H199.56V75.87H201.72V78.98H203.88V80.78H206.04V82.00H208.20V79.47H210.36V76.20H212.52V84.38H214.68V87.65H216.84V113.00H219.00V113.00H221.16V113.00H223.32V113.00H225.48V113.00H227.64V113.00H229.80V113.00H231.96V113.00H234.12V113.00H236.28V113.00H238.44V113.00H240.60V113.00H242.76V113.00H244.92V113.00H247.08V113.00H249.24V113.00H251.40V62.54H253.56V68.35H255.72V78.41H257.88V81.10H260.04V81.27H262.20V82.25H264.36V82.00H266.52V81.27H268.68V81.68H270.84V89.28H273.00V92.23H275.16V84.95H277.32V89.28H279.48V86.26H281.64V87.65H283.80V86.26H285.96V113.00H288.12V113.00H290.28V113.00H292.44V113.00H294.60V113.00H296.76V113.00H298.92V113.00H301.08V113.00H303.24V113.00H305.40V113.00H307.56V113.00H309.72V113.00H311.88V113.00H314.04V113.00H316.20V113.00H318.36V113.00H320.52V64.01H322.68V113.00H324.84V80.37H327.00V69.49H329.16V69.82H331.32V73.99H333.48V73.99H335.64V26.64H337.80V78.41H339.96V80.20H342.12V77.51H344.28V80.78H346.44V83.15H348.60V66.55H350.76V88.06H352.92V77.10H355.08V113.00H357.24V113.00H359.40V113.00H361.56V113.00H363.72V113.00H365.88V113.00H368.04V113.00H370.20V113.00H372.36V113.00H374.52V113.00H376.68V113.00H378.84V113.00H381.00V113.00H383.16V113.00H385.32V113.00H387.48" stroke="#3434ff" stroke-width="1.1" fill="none" stroke-linejoin="round" stroke-linecap="round"/><g font-size="11.4" letter-spacing="0.4" fill="#545454"><text x="111.00" y="128.80" text-anchor="middle">0</text><text x="154.20" y="128.80" text-anchor="middle">20</text><text x="197.40" y="128.80" text-anchor="middle">40</text><text x="240.60" y="128.80" text-anchor="middle">60</text><text x="283.80" y="128.80" text-anchor="middle">80</text><text x="327.00" y="128.80" text-anchor="middle">100</text><text x="370.20" y="128.80" text-anchor="middle">120</text><text x="106.80" y="117.00" text-anchor="end">0</text><text x="106.80" y="76.11" text-anchor="end">5000</text><text x="106.80" y="35.22" text-anchor="end">10000</text></g><rect x="290.60" y="27.50" width="15" height="11" fill="#fff" stroke="#ccc" stroke-width="1"/><rect x="292.10" y="29.00" width="12" height="8" fill="#0000ff"/><text x="309.60" y="36.80" font-size="11.4" letter-spacing="0.3" fill="#7d7d7d">aida07 Rate</text><path d="M387.20 6.90L398.40 18.10L387.20 29.30L376.00 18.10Z" fill="#ff0000"/></svg></div>
<div class="cell" style="left:1434px;top:413px;width:474px;height:134px"><svg width="474" height="134" viewBox="0 0 474 134" style="display:block"><path d="M154.20 18.00V113.00M197.40 18.00V113.00M240.60 18.00V113.00M283.80 18.00V113.00M327.00 18.00V113.00M370.20 18.00V113.00M111.00 72.11H389.00M111.00 31.22H389.00" stroke="#eaeaea" stroke-width="1" fill="none"/><rect x="110.00" y="17.00" width="280.00" height="97.00" fill="none" stroke="#8b8b8b" stroke-width="2"/><path d="M111.00 113.00H113.16V43.07H115.32V35.80H117.48V53.05H119.64V56.57H121.80V51.25H123.96V59.84H126.12V59.43H128.28V64.75H130.44V68.02H132.60V63.11H134.76V68.43H136.92V56.73H139.08V68.59H141.24V68.02H143.40V65.32H145.56V63.11H147.72V113.00H149.88V113.00H152.04V113.00H154.20V113.00H156.36V113.00H158.52V113.00H160.68V113.00H162.84V113.00H165.00V113.00H167.16V113.00H169.32V113.00H171.48V113.00H173.64V113.00H175.80V113.00H177.96V113.00H180.12V113.00H182.28V60.33H184.44V59.43H186.60V67.12H188.76V63.11H190.92V66.22H193.08V64.34H195.24V65.81H197.40V66.71H199.56V61.31H201.72V61.31H203.88V65.32H206.04V66.22H208.20V68.02H210.36V63.11H212.52V63.85H214.68V64.01H216.84V113.00H219.00V113.00H221.16V113.00H223.32V113.00H225.48V113.00H227.64V113.00H229.80V113.00H231.96V113.00H234.12V113.00H236.28V113.00H238.44V113.00H240.60V113.00H242.76V113.00H244.92V113.00H247.08V113.00H249.24V113.00H251.40V56.73H253.56V52.56H255.72V67.45H257.88V63.44H260.04V60.17H262.20V64.34H264.36V67.12H266.52V62.54H268.68V64.34H270.84V65.32H273.00V64.34H275.16V62.54H277.32V66.22H279.48V66.55H281.64V59.43H283.80V61.07H285.96V113.00H288.12V113.00H290.28V113.00H292.44V113.00H294.60V113.00H296.76V113.00H298.92V113.00H301.08V113.00H303.24V113.00H305.40V113.00H307.56V113.00H309.72V113.00H311.88V113.00H314.04V113.00H316.20V113.00H318.36V113.00H320.52V55.26H322.68V64.34H324.84V46.76H327.00V60.17H329.16V26.64H331.32V67.12H333.48V113.00H335.64V51.66H337.80V64.34H339.96V64.75H342.12V63.85H344.28V67.12H346.44V46.18H348.60V41.60H350.76V60.33H352.92V63.11H355.08V113.00H357.24V113.00H359.40V113.00H361.56V113.00H363.72V113.00H365.88V113.00H368.04V113.00H370.20V113.00H372.36V113.00H374.52V113.00H376.68V113.00H378.84V113.00H381.00V113.00H383.16V113.00H385.32V113.00H387.48" stroke="#3434ff" stroke-width="1.1" fill="none" stroke-linejoin="round" stroke-linecap="round"/><g font-size="11.4" letter-spacing="0.4" fill="#545454"><text x="111.00" y="128.80" text-anchor="middle">0</text><text x="154.20" y="128.80" text-anchor="middle">20</text><text x="197.40" y="128.80" text-anchor="middle">40</text><text x="240.60" y="128.80" text-anchor="middle">60</text><text x="283.80" y="128.80" text-anchor="middle">80</text><text x="327.00" y="128.80" text-anchor="middle">100</text><text x="370.20" y="128.80" text-anchor="middle">120</text><text x="106.80" y="117.00" text-anchor="end">0</text><text x="106.80" y="76.11" text-anchor="end">5000</text><text x="106.80" y="35.22" text-anchor="end">10000</text></g><rect x="290.60" y="27.50" width="15" height="11" fill="#fff" stroke="#ccc" stroke-width="1"/><rect x="292.10" y="29.00" width="12" height="8" fill="#0000ff"/><text x="309.60" y="36.80" font-size="11.4" letter-spacing="0.3" fill="#7d7d7d">aida08 Rate</text><path d="M387.20 6.90L398.40 18.10L387.20 29.30L376.00 18.10Z" fill="#ff0000"/></svg></div>
<div class="cell" style="left:6px;top:549px;width:474px;height:134px"><svg width="474" height="134" viewBox="0 0 474 134" style="display:block"><path d="M148.22 18.00V113.00M192.44 18.00V113.00M236.66 18.00V113.00M280.88 18.00V113.00M325.10 18.00V113.00M369.32 18.00V113.00M104.00 83.01H389.00M104.00 53.03H389.00M104.00 23.04H389.00" stroke="#eaeaea" stroke-width="1" fill="none"/><rect x="103.00" y="17.00" width="287.00" height="97.00" fill="none" stroke="#8b8b8b" stroke-width="2"/><path d="M104.00 113.00H106.21V64.42H108.42V27.54H110.63V61.12H112.84V65.32H115.06V50.78H117.27V73.12H119.48V113.00H121.69V68.02H123.90V67.42H126.11V70.72H128.32V71.02H130.53V73.12H132.74V72.22H134.95V69.22H137.16V71.32H139.38V80.76H141.59V113.00H143.80V113.00H146.01V113.00H148.22V113.00H150.43V113.00H152.64V113.00H154.85V113.00H157.06V113.00H159.28V113.00H161.49V113.00H163.70V113.00H165.91V113.00H168.12V113.00H170.33V113.00H172.54V113.00H174.75V113.00H176.96V75.67H179.17V83.01H181.38V75.22H183.60V74.77H185.81V79.26H188.02V75.82H190.23V73.42H192.44V75.82H194.65V78.96H196.86V72.52H199.07V74.92H201.28V76.57H203.50V84.96H205.71V71.62H207.92V82.26H210.13V78.51H212.34V113.00H214.55V113.00H216.76V113.00H218.97V113.00H221.18V113.00H223.39V113.00H225.60V113.00H227.82V113.00H230.03V113.00H232.24V113.00H234.45V113.00H236.66V113.00H238.87V113.00H241.08V113.00H243.29V113.00H245.50V113.00H247.72V56.77H249.93V67.42H252.14V78.06H254.35V65.77H256.56V77.17H258.77V74.02H260.98V66.67H263.19V71.62H265.40V74.02H267.61V72.52H269.82V73.87H272.04V74.02H274.25V71.02H276.46V76.57H278.67V72.52H280.88V72.97H283.09V113.00H285.30V113.00H287.51V113.00H289.72V113.00H291.93V113.00H294.15V113.00H296.36V113.00H298.57V113.00H300.78V113.00H302.99V113.00H305.20V113.00H307.41V113.00H309.62V113.00H311.83V113.00H314.04V113.00H316.26V113.00H318.47V68.02H320.68V72.52H322.89V63.97H325.10V71.02H327.31V63.97H329.52V69.82H331.73V65.32H333.94V26.64H336.15V71.32H338.37V67.12H340.58V72.97H342.79V74.32H345.00V74.77H347.21V55.57H349.42V80.16H351.63V73.12H353.84V113.00H356.05V113.00H358.26V113.00H360.48V113.00H362.69V113.00H364.90V113.00H367.11V113.00H369.32V113.00H371.53V113.00H373.74V113.00H375.95V113.00H378.16V113.00H380.38V113.00H382.59V113.00H384.80V113.00H387.01" stroke="#3434ff" stroke-width="1.1" fill="none" stroke-linejoin="round" stroke-linecap="round"/><g font-size="11.4" letter-spacing="0.4" fill="#545454"><text x="104.00" y="128.80" text-anchor="middle">0</text><text x="148.22" y="128.80" text-anchor="middle">20</text><text x="192.44" y="128.80" text-anchor="middle">40</text><text x="236.66" y="128.80" text-anchor="middle">60</text><text x="280.88" y="128.80" text-anchor="middle">80</text><text x="325.10" y="128.80" text-anchor="middle">100</text><text x="369.32" y="128.80" text-anchor="middle">120</text><text x="98.60" y="117.00" text-anchor="end">0</text><text x="98.60" y="87.01" text-anchor="end">2000</text><text x="98.60" y="57.03" text-anchor="end">4000</text><text x="98.60" y="27.04" text-anchor="end">6000</text></g><rect x="290.60" y="27.50" width="15" height="11" fill="#fff" stroke="#ccc" stroke-width="1"/><rect x="292.10" y="29.00" width="12" height="8" fill="#0000ff"/><text x="309.60" y="36.80" font-size="11.4" letter-spacing="0.3" fill="#7d7d7d">aida09 Rate</text><path d="M387.20 6.90L398.40 18.10L387.20 29.30L376.00 18.10Z" fill="#ff0000"/></svg></div>
<div class="cell" style="left:482px;top:549px;width:474px;height:134px"><svg width="474" height="134" viewBox="0 0 474 134" style="display:block"><path d="M154.20 18.00V113.00M197.40 18.00V113.00M240.60 18.00V113.00M283.80 18.00V113.00M327.00 18.00V113.00M370.20 18.00V113.00M111.00 82.72H389.00M111.00 52.44H389.00M111.00 22.15H389.00" stroke="#eaeaea" stroke-width="1" fill="none"/><rect x="110.00" y="17.00" width="280.00" height="97.00" fill="none" stroke="#8b8b8b" stroke-width="2"/><path d="M111.00 113.00H113.16V108.76H115.32V26.64H117.48V108.76H119.64V111.00H121.80V104.28H123.96V109.18H126.12V110.64H128.28V108.76H130.44V111.00H132.60V109.37H134.76V110.09H136.92V110.82H139.08V111.00H141.24V111.00H143.40V111.00H145.56V111.18H147.72V113.00H149.88V113.00H152.04V113.00H154.20V113.00H156.36V113.00H158.52V113.00H160.68V113.00H162.84V113.00H165.00V113.00H167.16V113.00H169.32V113.00H171.48V113.00H173.64V113.00H175.80V113.00H177.96V113.00H180.12V113.00H182.28V110.64H184.44V111.00H186.60V111.00H188.76V109.00H190.92V110.82H193.08V110.09H195.24V110.82H197.40V111.18H199.56V109.18H201.72V109.18H203.88V110.27H206.04V108.82H208.20V109.18H210.36V109.18H212.52V111.91H214.68V108.82H216.84V113.00H219.00V113.00H221.16V113.00H223.32V113.00H225.48V113.00H227.64V113.00H229.80V113.00H231.96V113.00H234.12V113.00H236.28V113.00H238.44V113.00H240.60V113.00H242.76V113.00H244.92V113.00H247.08V113.00H249.24V113.00H251.40V107.37H253.56V109.18H255.72V106.10H257.88V110.82H260.04V110.82H262.20V110.82H264.36V110.46H266.52V108.46H268.68V110.09H270.84V109.18H273.00V109.55H275.16V108.09H277.32V109.73H279.48V108.82H281.64V110.09H283.80V108.82H285.96V113.00H288.12V113.00H290.28V113.00H292.44V113.00H294.60V113.00H296.76V113.00H298.92V113.00H301.08V113.00H303.24V113.00H305.40V113.00H307.56V113.00H309.72V113.00H311.88V113.00H314.04V113.00H316.20V113.00H318.36V113.00H320.52V109.91H322.68V111.91H324.84V108.28H327.00V110.64H329.16V106.46H331.32V105.73H333.48V107.91H335.64V53.65H337.80V108.82H339.96V107.00H342.12V103.01H344.28V107.91H346.44V106.10H348.60V77.51H350.76V109.73H352.92V108.64H355.08V113.00H357.24V113.00H359.40V113.00H361.56V113.00H363.72V113.00H365.88V113.00H368.04V113.00H370.20V113.00H372.36V113.00H374.52V113.00H376.68V113.00H378.84V113.00H381.00V113.00H383.16V113.00H385.32V113.00H387.48" stroke="#3434ff" stroke-width="1.1" fill="none" stroke-linejoin="round" stroke-linecap="round"/><g font-size="11.4" letter-spacing="0.4" fill="#545454"><text x="111.00" y="128.80" text-anchor="middle">0</text><text x="154.20" y="128.80" text-anchor="middle">20</text><text x="197.40" y="128.80" text-anchor="middle">40</text><text x="240.60" y="128.80" text-anchor="middle">60</text><text x="283.80" y="128.80" text-anchor="middle">80</text><text x="327.00" y="128.80" text-anchor="middle">100</text><text x="370.20" y="128.80" text-anchor="middle">120</text><text x="106.80" y="117.00" text-anchor="end">0</text><text x="106.80" y="86.72" text-anchor="end">5000</text><text x="106.80" y="56.44" text-anchor="end">10000</text><text x="106.80" y="26.15" text-anchor="end">15000</text></g><rect x="290.60" y="27.50" width="15" height="11" fill="#fff" stroke="#ccc" stroke-width="1"/><rect x="292.10" y="29.00" width="12" height="8" fill="#0000ff"/><text x="309.60" y="36.80" font-size="11.4" letter-spacing="0.3" fill="#7d7d7d">aida10 Rate</text><path d="M387.20 6.90L398.40 18.10L387.20 29.30L376.00 18.10Z" fill="#ff0000"/></svg></div>
<div class="cell" style="left:958px;top:549px;width:474px;height:134px"><svg width="474" height="134" viewBox="0 0 474 134" style="display:block"><path d="M154.20 18.00V113.00M197.40 18.00V113.00M240.60 18.00V113.00M283.80 18.00V113.00M327.00 18.00V113.00M370.20 18.00V113.00M111.00 83.01H389.00M111.00 53.03H389.00M111.00 23.04H389.00" stroke="#eaeaea" stroke-width="1" fill="none"/><rect x="110.00" y="17.00" width="280.00" height="97.00" fill="none" stroke="#8b8b8b" stroke-width="2"/><path d="M111.00 113.00H113.16V50.63H115.32V26.64H117.48V43.43H119.64V59.38H121.80V41.93H123.96V58.84H126.12V52.85H128.28V64.84H130.44V63.40H132.60V63.94H134.76V71.92H136.92V77.91H139.08V68.32H141.24V74.32H143.40V83.73H145.56V65.20H147.72V113.00H149.88V113.00H152.04V113.00H154.20V113.00H156.36V113.00H158.52V113.00H160.68V113.00H162.84V113.00H165.00V113.00H167.16V113.00H169.32V113.00H171.48V113.00H173.64V113.00H175.80V113.00H177.96V113.00H180.12V113.00H182.28V108.80H184.44V76.48H186.60V108.80H188.76V112.64H190.92V85.17H193.08V112.64H195.24V112.64H197.40V87.57H199.56V112.64H201.72V89.73H203.88V88.29H206.04V112.64H208.20V112.76H210.36V88.47H212.52V112.76H214.68V89.19H216.84V113.00H219.00V113.00H221.16V113.00H223.32V113.00H225.48V113.00H227.64V113.00H229.80V113.00H231.96V113.00H234.12V113.00H236.28V113.00H238.44V113.00H240.60V113.00H242.76V113.00H244.92V113.00H247.08V113.00H249.24V113.00H251.40V112.40H253.56V112.40H255.72V112.64H257.88V112.64H260.04V112.64H262.20V84.45H264.36V112.76H266.52V84.81H268.68V88.29H270.84V112.76H273.00V89.19H275.16V86.49H277.32V112.76H279.48V87.93H281.64V112.76H283.80V112.82H285.96V113.00H288.12V113.00H290.28V113.00H292.44V113.00H294.60V113.00H296.76V113.00H298.92V113.00H301.08V113.00H303.24V113.00H305.40V113.00H307.56V113.00H309.72V113.00H311.88V113.00H314.04V113.00H316.20V113.00H318.36V113.00H320.52V84.27H322.68V112.76H324.84V112.76H327.00V87.03H329.16V112.76H331.32V84.27H333.48V86.49H335.64V95.19H337.80V112.76H339.96V112.76H342.12V88.29H344.28V85.53H346.44V88.83H348.60V96.45H350.76V88.29H352.92V112.76H355.08V113.00H357.24V113.00H359.40V113.00H361.56V113.00H363.72V113.00H365.88V113.00H368.04V113.00H370.20V113.00H372.36V113.00H374.52V113.00H376.68V113.00H378.84V113.00H381.00V113.00H383.16V113.00H385.32V113.00H387.48" stroke="#3434ff" stroke-width="1.1" fill="none" stroke-linejoin="round" stroke-linecap="round"/><g font-size="11.4" letter-spacing="0.4" fill="#545454"><text x="111.00" y="128.80" text-anchor="middle">0</text><text x="154.20" y="128.80" text-anchor="middle">20</text><text x="197.40" y="128.80" text-anchor="middle">40</text><text x="240.60" y="128.80" text-anchor="middle">60</text><text x="283.80" y="128.80" text-anchor="middle">80</text><text x="327.00" y="128.80" text-anchor="middle">100</text><text x="370.20" y="128.80" text-anchor="middle">120</text><text x="106.80" y="117.00" text-anchor="end">0</text><text x="106.80" y="87.01" text-anchor="end">5000</text><text x="106.80" y="57.03" text-anchor="end">10000</text><text x="106.80" y="27.04" text-anchor="end">15000</text></g><rect x="290.60" y="27.50" width="15" height="11" fill="#fff" stroke="#ccc" stroke-width="1"/><rect x="292.10" y="29.00" width="12" height="8" fill="#0000ff"/><text x="309.60" y="36.80" font-size="11.4" letter-spacing="0.3" fill="#7d7d7d">aida11 Rate</text><path d="M387.20 6.90L398.40 18.10L387.20 29.30L376.00 18.10Z" fill="#ff0000"/></svg></div>
<div class="cell" style="left:1434px;top:549px;width:474px;height:134px"><svg width="474" height="134" viewBox="0 0 474 134" style="display:block"><path d="M154.20 18.00V113.00M197.40 18.00V113.00M240.60 18.00V113.00M283.80 18.00V113.00M327.00 18.00V113.00M370.20 18.00V113.00M111.00 86.44H389.00M111.00 59.89H389.00M111.00 33.33H389.00" stroke="#eaeaea" stroke-width="1" fill="none"/><rect x="110.00" y="17.00" width="280.00" height="97.00" fill="none" stroke="#8b8b8b" stroke-width="2"/><path d="M111.00 113.00H113.16V106.41H115.32V52.98H117.48V108.43H119.64V103.01H121.80V101.21H123.96V105.56H126.12V104.29H128.28V106.10H130.44V108.43H132.60V105.14H134.76V106.94H136.92V109.39H139.08V104.29H141.24V108.86H143.40V108.43H145.56V107.90H147.72V113.00H149.88V113.00H152.04V113.00H154.20V113.00H156.36V113.00H158.52V113.00H160.68V113.00H162.84V113.00H165.00V113.00H167.16V113.00H169.32V113.00H171.48V113.00H173.64V113.00H175.80V113.00H177.96V113.00H180.12V113.00H182.28V108.43H184.44V106.63H186.60V104.82H188.76V109.71H190.92V109.18H193.08V108.86H195.24V108.86H197.40V106.94H199.56V107.90H201.72V108.22H203.88V109.18H206.04V110.13H208.20V108.22H210.36V109.18H212.52V107.90H214.68V110.24H216.84V113.00H219.00V113.00H221.16V113.00H223.32V113.00H225.48V113.00H227.64V113.00H229.80V113.00H231.96V113.00H234.12V113.00H236.28V113.00H238.44V113.00H240.60V113.00H242.76V113.00H244.92V113.00H247.08V113.00H249.24V113.00H251.40V104.82H253.56V103.01H255.72V106.10H257.88V106.94H260.04V103.86H262.20V103.86H264.36V100.68H266.52V96.11H268.68V107.58H270.84V106.10H273.00V100.68H275.16V106.94H277.32V96.64H279.48V105.78H281.64V103.33H283.80V103.86H285.96V113.00H288.12V113.00H290.28V113.00H292.44V113.00H294.60V113.00H296.76V113.00H298.92V113.00H301.08V113.00H303.24V113.00H305.40V113.00H307.56V113.00H309.72V113.00H311.88V113.00H314.04V113.00H316.20V113.00H318.36V113.00H320.52V105.78H322.68V100.04H324.84V105.56H327.00V106.10H329.16V98.77H331.32V104.29H333.48V102.48H335.64V26.64H337.80V100.04H339.96V99.72H342.12V96.11H344.28V106.94H346.44V106.94H348.60V60.63H350.76V104.61H352.92V105.14H355.08V113.00H357.24V113.00H359.40V113.00H361.56V113.00H363.72V113.00H365.88V113.00H368.04V113.00H370.20V113.00H372.36V113.00H374.52V113.00H376.68V113.00H378.84V113.00H381.00V113.00H383.16V113.00H385.32V113.00H387.48" stroke="#3434ff" stroke-width="1.1" fill="none" stroke-linejoin="round" stroke-linecap="round"/><g font-size="11.4" letter-spacing="0.4" fill="#545454"><text x="111.00" y="128.80" text-anchor="middle">0</text><text x="154.20" y="128.80" text-anchor="middle">20</text><text x="197.40" y="128.80" text-anchor="middle">40</text><text x="240.60" y="128.80" text-anchor="middle">60</text><text x="283.80" y="128.80" text-anchor="middle">80</text><text x="327.00" y="128.80" text-anchor="middle">100</text><text x="370.20" y="128.80" text-anchor="middle">120</text><text x="106.80" y="117.00" text-anchor="end">0</text><text x="106.80" y="90.44" text-anchor="end">2500</text><text x="106.80" y="63.89" text-anchor="end">5000</text><text x="106.80" y="37.33" text-anchor="end">7500</text></g><rect x="290.60" y="27.50" width="15" height="11" fill="#fff" stroke="#ccc" stroke-width="1"/><rect x="292.10" y="29.00" width="12" height="8" fill="#0000ff"/><text x="309.60" y="36.80" font-size="11.4" letter-spacing="0.3" fill="#7d7d7d">aida12 Rate</text><path d="M387.20 6.90L398.40 18.10L387.20 29.30L376.00 18.10Z" fill="#ff0000"/></svg></div>
<div class="cell" style="left:6px;top:685px;width:474px;height:135px"><svg width="474" height="135" viewBox="0 0 474 135" style="display:block"><path d="M154.20 18.20V113.30M197.40 18.20V113.30M240.60 18.20V113.30M283.80 18.20V113.30M327.00 18.20V113.30M370.20 18.20V113.30M111.00 90.28H389.00M111.00 67.26H389.00M111.00 44.25H389.00M111.00 21.23H389.00" stroke="#eaeaea" stroke-width="1" fill="none"/><rect x="110.00" y="17.20" width="280.00" height="97.10" fill="none" stroke="#8b8b8b" stroke-width="2"/><path d="M111.00 113.30H113.16V101.51H115.32V26.85H117.48V105.15H119.64V98.80H121.80V58.06H123.96V100.96H126.12V113.30H128.28V102.99H130.44V113.30H132.60V101.88H134.76V101.88H136.92V104.23H139.08V100.96H141.24V102.99H143.40V104.23H145.56V105.34H147.72V113.30H149.88V113.30H152.04V113.30H154.20V113.30H156.36V113.30H158.52V113.30H160.68V113.30H162.84V113.30H165.00V113.30H167.16V113.30H169.32V113.30H171.48V113.30H173.64V113.30H175.80V113.30H177.96V113.30H180.12V113.30H182.28V102.80H184.44V102.80H186.60V103.31H188.76V104.23H190.92V113.30H193.08V100.09H195.24V101.15H197.40V101.88H199.56V102.99H201.72V105.15H203.88V103.86H206.04V103.31H208.20V102.80H210.36V103.31H212.52V106.58H214.68V103.86H216.84V113.30H219.00V113.30H221.16V113.30H223.32V113.30H225.48V113.30H227.64V113.30H229.80V113.30H231.96V113.30H234.12V113.30H236.28V113.30H238.44V113.30H240.60V113.30H242.76V113.30H244.92V113.30H247.08V113.30H249.24V113.30H251.40V97.00H253.56V101.15H255.72V101.15H257.88V100.96H260.04V100.27H262.20V100.96H264.36V102.44H266.52V98.80H268.68V100.27H270.84V101.51H273.00V101.51H275.16V101.88H277.32V99.35H279.48V99.17H281.64V102.80H283.80V100.59H285.96V113.30H288.12V113.30H290.28V113.30H292.44V113.30H294.60V113.30H296.76V113.30H298.92V113.30H301.08V113.30H303.24V113.30H305.40V113.30H307.56V113.30H309.72V113.30H311.88V113.30H314.04V113.30H316.20V113.30H318.36V113.30H320.52V102.80H322.68V100.27H324.84V100.27H327.00V102.99H329.16V97.51H331.32V100.59H333.48V102.80H335.64V79.42H337.80V101.15H339.96V99.35H342.12V101.51H344.28V104.23H346.44V100.27H348.60V90.10H350.76V104.60H352.92V100.96H355.08V113.30H357.24V113.30H359.40V113.30H361.56V113.30H363.72V113.30H365.88V113.30H368.04V113.30H370.20V113.30H372.36V113.30H374.52V113.30H376.68V113.30H378.84V113.30H381.00V113.30H383.16V113.30H385.32V113.30H387.48" stroke="#3434ff" stroke-width="1.1" fill="none" stroke-linejoin="round" stroke-linecap="round"/><g font-size="11.4" letter-spacing="0.4" fill="#545454"><text x="111.00" y="129.10" text-anchor="middle">0</text><text x="154.20" y="129.10" text-anchor="middle">20</text><text x="197.40" y="129.10" text-anchor="middle">40</text><text x="240.60" y="129.10" text-anchor="middle">60</text><text x="283.80" y="129.10" text-anchor="middle">80</text><text x="327.00" y="129.10" text-anchor="middle">100</text><text x="370.20" y="129.10" text-anchor="middle">120</text><text x="106.80" y="117.30" text-anchor="end">0</text><text x="106.80" y="94.28" text-anchor="end">5000</text><text x="106.80" y="71.26" text-anchor="end">10000</text><text x="106.80" y="48.25" text-anchor="end">15000</text><text x="106.80" y="25.23" text-anchor="end">20000</text></g><rect x="290.60" y="27.70" width="15" height="11" fill="#fff" stroke="#ccc" stroke-width="1"/><rect x="292.10" y="29.20" width="12" height="8" fill="#0000ff"/><text x="309.60" y="37.00" font-size="11.4" letter-spacing="0.3" fill="#7d7d7d">aida13 Rate</text><path d="M387.20 7.10L398.40 18.30L387.20 29.50L376.00 18.30Z" fill="#ff0000"/></svg></div>
<div class="cell" style="left:482px;top:685px;width:474px;height:135px"><svg width="474" height="135" viewBox="0 0 474 135" style="display:block"><path d="M154.20 18.20V113.30M197.40 18.20V113.30M240.60 18.20V113.30M283.80 18.20V113.30M327.00 18.20V113.30M370.20 18.20V113.30M111.00 87.93H389.00M111.00 62.56H389.00M111.00 37.20H389.00" stroke="#eaeaea" stroke-width="1" fill="none"/><rect x="110.00" y="17.20" width="280.00" height="97.10" fill="none" stroke="#8b8b8b" stroke-width="2"/><path d="M111.00 113.30H113.16V94.27H115.32V26.85H117.48V99.14H119.64V99.70H121.80V53.48H123.96V100.06H126.12V101.17H128.28V94.27H130.44V101.17H132.60V99.35H134.76V100.62H136.92V101.53H139.08V94.27H141.24V113.30H143.40V102.95H145.56V104.22H147.72V113.30H149.88V113.30H152.04V113.30H154.20V113.30H156.36V113.30H158.52V113.30H160.68V113.30H162.84V113.30H165.00V113.30H167.16V113.30H169.32V113.30H171.48V113.30H173.64V113.30H175.80V113.30H177.96V113.30H180.12V113.30H182.28V97.88H184.44V93.01H186.60V101.53H188.76V100.62H190.92V101.53H193.08V99.70H195.24V99.14H197.40V100.06H199.56V102.95H201.72V101.17H203.88V101.53H206.04V102.95H208.20V101.53H210.36V100.06H212.52V104.78H214.68V103.36H216.84V113.30H219.00V113.30H221.16V113.30H223.32V113.30H225.48V113.30H227.64V113.30H229.80V113.30H231.96V113.30H234.12V113.30H236.28V113.30H238.44V113.30H240.60V113.30H242.76V113.30H244.92V113.30H247.08V113.30H249.24V113.30H251.40V93.92H253.56V97.01H255.72V104.22H257.88V101.53H260.04V102.09H262.20V103.36H264.36V101.53H266.52V102.09H268.68V103.36H270.84V105.49H273.00V104.62H275.16V103.71H277.32V104.62H279.48V106.04H281.64V103.36H283.80V101.88H285.96V113.30H288.12V113.30H290.28V113.30H292.44V113.30H294.60V113.30H296.76V113.30H298.92V113.30H301.08V113.30H303.24V113.30H305.40V113.30H307.56V113.30H309.72V113.30H311.88V113.30H314.04V113.30H316.20V113.30H318.36V113.30H320.52V103.71H322.68V99.70H324.84V100.97H327.00V104.22H329.16V102.44H331.32V101.17H333.48V100.26H335.64V70.38H337.80V100.97H339.96V101.88H342.12V102.80H344.28V101.88H346.44V102.44H348.60V85.75H350.76V103.86H352.92V101.53H355.08V113.30H357.24V113.30H359.40V113.30H361.56V113.30H363.72V113.30H365.88V113.30H368.04V113.30H370.20V113.30H372.36V113.30H374.52V113.30H376.68V113.30H378.84V113.30H381.00V113.30H383.16V113.30H385.32V113.30H387.48" stroke="#3434ff" stroke-width="1.1" fill="none" stroke-linejoin="round" stroke-linecap="round"/><g font-size="11.4" letter-spacing="0.4" fill="#545454"><text x="111.00" y="129.10" text-anchor="middle">0</text><text x="154.20" y="129.10" text-anchor="middle">20</text><text x="197.40" y="129.10" text-anchor="middle">40</text><text x="240.60" y="129.10" text-anchor="middle">60</text><text x="283.80" y="129.10" text-anchor="middle">80</text><text x="327.00" y="129.10" text-anchor="middle">100</text><text x="370.20" y="129.10" text-anchor="middle">120</text><text x="106.80" y="117.30" text-anchor="end">0</text><text x="106.80" y="91.93" text-anchor="end">5000</text><text x="106.80" y="66.56" text-anchor="end">10000</text><text x="106.80" y="41.20" text-anchor="end">15000</text></g><rect x="290.60" y="27.70" width="15" height="11" fill="#fff" stroke="#ccc" stroke-width="1"/><rect x="292.10" y="29.20" width="12" height="8" fill="#0000ff"/><text x="309.60" y="37.00" font-size="11.4" letter-spacing="0.3" fill="#7d7d7d">aida14 Rate</text><path d="M387.20 7.10L398.40 18.30L387.20 29.50L376.00 18.30Z" fill="#ff0000"/></svg></div>
<div class="cell" style="left:958px;top:685px;width:474px;height:135px"><svg width="474" height="135" viewBox="0 0 474 135" style="display:block"><path d="M148.22 18.20V113.30M192.44 18.20V113.30M236.66 18.20V113.30M280.88 18.20V113.30M325.10 18.20V113.30M369.32 18.20V113.30M104.00 88.20H389.00M104.00 63.11H389.00M104.00 38.01H389.00" stroke="#eaeaea" stroke-width="1" fill="none"/><rect x="103.00" y="17.20" width="287.00" height="97.10" fill="none" stroke="#8b8b8b" stroke-width="2"/><path d="M104.00 113.30H106.21V113.30H108.42V26.85H110.63V76.16H112.84V93.35H115.06V58.59H117.27V80.68H119.48V90.59H121.69V78.54H123.90V80.30H126.11V87.58H128.32V87.95H130.53V90.96H132.74V90.59H134.95V90.96H137.16V87.58H139.38V95.73H141.59V113.30H143.80V113.30H146.01V113.30H148.22V113.30H150.43V113.30H152.64V113.30H154.85V113.30H157.06V113.30H159.28V113.30H161.49V113.30H163.70V113.30H165.91V113.30H168.12V113.30H170.33V113.30H172.54V113.30H174.75V113.30H176.96V81.18H179.17V85.69H181.38V81.93H183.60V86.70H185.81V86.95H188.02V93.35H190.23V78.54H192.44V88.83H194.65V89.21H196.86V91.59H199.07V89.71H201.28V85.69H203.50V86.70H205.71V80.68H207.92V91.97H210.13V84.31H212.34V113.30H214.55V113.30H216.76V113.30H218.97V113.30H221.18V113.30H223.39V113.30H225.60V113.30H227.82V113.30H230.03V113.30H232.24V113.30H234.45V113.30H236.66V113.30H238.87V113.30H241.08V113.30H243.29V113.30H245.50V113.30H247.72V67.12H249.93V77.04H252.14V75.78H254.35V79.42H256.56V78.54H258.77V88.83H260.98V87.95H263.19V76.53H265.40V83.94H267.61V83.94H269.82V84.69H272.04V77.54H274.25V81.05H276.46V88.83H278.67V82.43H280.88V77.54H283.09V113.30H285.30V113.30H287.51V113.30H289.72V113.30H291.93V113.30H294.15V113.30H296.36V113.30H298.57V113.30H300.78V113.30H302.99V113.30H305.20V113.30H307.41V113.30H309.62V113.30H311.83V113.30H314.04V113.30H316.26V113.30H318.47V80.68H320.68V77.92H322.89V76.66H325.10V84.31H327.31V76.66H329.52V81.05H331.73V86.70H333.94V30.74H336.15V80.30H338.37V86.70H340.58V87.95H342.79V85.69H345.00V82.43H347.21V51.06H349.42V94.23H351.63V81.55H353.84V113.30H356.05V113.30H358.26V113.30H360.48V113.30H362.69V113.30H364.90V113.30H367.11V113.30H369.32V113.30H371.53V113.30H373.74V113.30H375.95V113.30H378.16V113.30H380.38V113.30H382.59V113.30H384.80V113.30H387.01" stroke="#3434ff" stroke-width="1.1" fill="none" stroke-linejoin="round" stroke-linecap="round"/><g font-size="11.4" letter-spacing="0.4" fill="#545454"><text x="104.00" y="129.10" text-anchor="middle">0</text><text x="148.22" y="129.10" text-anchor="middle">20</text><text x="192.44" y="129.10" text-anchor="middle">40</text><text x="236.66" y="129.10" text-anchor="middle">60</text><text x="280.88" y="129.10" text-anchor="middle">80</text><text x="325.10" y="129.10" text-anchor="middle">100</text><text x="369.32" y="129.10" text-anchor="middle">120</text><text x="98.60" y="117.30" text-anchor="end">0</text><text x="98.60" y="92.20" text-anchor="end">2000</text><text x="98.60" y="67.11" text-anchor="end">4000</text><text x="98.60" y="42.01" text-anchor="end">6000</text></g><rect x="290.60" y="27.70" width="15" height="11" fill="#fff" stroke="#ccc" stroke-width="1"/><rect x="292.10" y="29.20" width="12" height="8" fill="#0000ff"/><text x="309.60" y="37.00" font-size="11.4" letter-spacing="0.3" fill="#7d7d7d">aida15 Rate</text><path d="M387.20 7.10L398.40 18.30L387.20 29.50L376.00 18.30Z" fill="#ff0000"/></svg></div>
<div class="cell" style="left:1434px;top:685px;width:474px;height:135px"><svg width="474" height="135" viewBox="0 0 474 135" style="display:block"><path d="M154.20 18.20V113.30M197.40 18.20V113.30M240.60 18.20V113.30M283.80 18.20V113.30M327.00 18.20V113.30M370.20 18.20V113.30M111.00 91.72H389.00M111.00 70.14H389.00M111.00 48.55H389.00M111.00 26.97H389.00" stroke="#cdcdcd" stroke-width="1" fill="none"/><rect x="110.00" y="17.20" width="280.00" height="97.10" fill="none" stroke="#000000" stroke-width="2"/><path d="M111.00 113.30H113.16V96.29H115.32V61.68H117.48V104.15H119.64V100.87H121.80V80.84H123.96V102.68H126.12V99.06H128.28V103.29H130.44V104.93H132.60V104.58H134.76V99.40H136.92V100.52H139.08V103.63H141.24V105.96H143.40V102.16H145.56V107.26H147.72V113.30H149.88V113.30H152.04V113.30H154.20V113.30H156.36V113.30H158.52V113.30H160.68V113.30H162.84V113.30H165.00V113.30H167.16V113.30H169.32V113.30H171.48V113.30H173.64V113.30H175.80V113.30H177.96V113.30H180.12V113.30H182.28V97.24H184.44V102.34H186.60V92.15H188.76V92.67H190.92V100.01H193.08V95.43H195.24V96.29H197.40V96.90H199.56V96.90H201.72V95.43H203.88V98.71H206.04V94.48H208.20V102.34H210.36V98.19H212.52V98.19H214.68V101.82H216.84V113.30H219.00V113.30H221.16V113.30H223.32V113.30H225.48V113.30H227.64V113.30H229.80V113.30H231.96V113.30H234.12V113.30H236.28V113.30H238.44V113.30H240.60V113.30H242.76V113.30H244.92V113.30H247.08V113.30H249.24V113.30H251.40V93.19H253.56V99.57H255.72V101.47H257.88V97.24H260.04V101.47H262.20V96.29H264.36V99.06H266.52V95.95H268.68V99.57H270.84V100.52H273.00V102.68H275.16V102.34H277.32V102.34H279.48V113.30H281.64V104.58H283.80V100.87H285.96V113.30H288.12V113.30H290.28V113.30H292.44V113.30H294.60V113.30H296.76V113.30H298.92V113.30H301.08V113.30H303.24V113.30H305.40V113.30H307.56V113.30H309.72V113.30H311.88V113.30H314.04V113.30H316.20V113.30H318.36V113.30H320.52V104.15H322.68V100.87H324.84V95.08H327.00V96.29H329.16V113.30H331.32V93.96H333.48V100.87H335.64V26.84H337.80V87.57H339.96V96.90H342.12V96.29H344.28V98.19H346.44V99.40H348.60V60.21H350.76V103.11H352.92V98.19H355.08V113.30H357.24V113.30H359.40V113.30H361.56V113.30H363.72V113.30H365.88V113.30H368.04V113.30H370.20V113.30H372.36V113.30H374.52V113.30H376.68V113.30H378.84V113.30H381.00V113.30H383.16V113.30H385.32V113.30H387.48" stroke="#3434ff" stroke-width="1.1" fill="none" stroke-linejoin="round" stroke-linecap="round"/><g font-size="11.4" letter-spacing="0.4" fill="#545454"><text x="111.00" y="129.10" text-anchor="middle">0</text><text x="154.20" y="129.10" text-anchor="middle">20</text><text x="197.40" y="129.10" text-anchor="middle">40</text><text x="240.60" y="129.10" text-anchor="middle">60</text><text x="283.80" y="129.10" text-anchor="middle">80</text><text x="327.00" y="129.10" text-anchor="middle">100</text><text x="370.20" y="129.10" text-anchor="middle">120</text><text x="106.80" y="117.30" text-anchor="end">0</text><text x="106.80" y="95.72" text-anchor="end">2500</text><text x="106.80" y="74.14" text-anchor="end">5000</text><text x="106.80" y="52.55" text-anchor="end">7500</text><text x="106.80" y="30.97" text-anchor="end">10000</text></g><rect x="290.60" y="27.70" width="15" height="11" fill="#fff" stroke="#ccc" stroke-width="1"/><rect x="292.10" y="29.20" width="12" height="8" fill="#0000ff"/><text x="309.60" y="37.00" font-size="11.4" letter-spacing="0.3" fill="#000000">aida16 Rate</text><path d="M387.20 7.10L398.40 18.30L387.20 29.50L376.00 18.30Z" fill="#00ff00"/></svg></div>
<button type="button" class="btn" style="left:3.9px;top:836.2px;width:111.0px;height:19.6px;letter-spacing:0.078px">Empty Log Window</button>
<button type="button" class="btn" style="left:120.2px;top:836.2px;width:147.6px;height:19.6px;letter-spacing:-0.025px">Send Log Window to ELog</button>
<button type="button" class="btn" style="left:272.0px;top:836.2px;width:44.9px;height:19.6px;letter-spacing:-0.435px">Reload</button>
<button type="button" class="btn" style="left:321.1px;top:836.2px;width:38.8px;height:19.6px;letter-spacing:-0.450px">Reset</button>
<button type="button" class="btn" style="left:364.2px;top:836.2px;width:88.5px;height:19.6px;letter-spacing:-0.117px">Show Variables</button>
<button type="button" class="btn" style="left:458.0px;top:836.2px;width:106.7px;height:19.6px;letter-spacing:0.083px">Show Log Window</button>
<button type="button" class="btn" style="left:570.0px;top:836.2px;width:87.9px;height:19.6px;letter-spacing:-0.210px">Enable Logging</button>
<button type="button" class="btn" style="left:1790.1px;top:836.2px;width:119.5px;height:19.6px;letter-spacing:0.054px">How to use this page</button>
<div class="t" style="right:1.7px;top:871.52px;font-size:14.4px">Last Updated: April 08, 2022 10:11:17</div>
<div class="hr" style="top:903px"></div>
</div>
</body></html>
